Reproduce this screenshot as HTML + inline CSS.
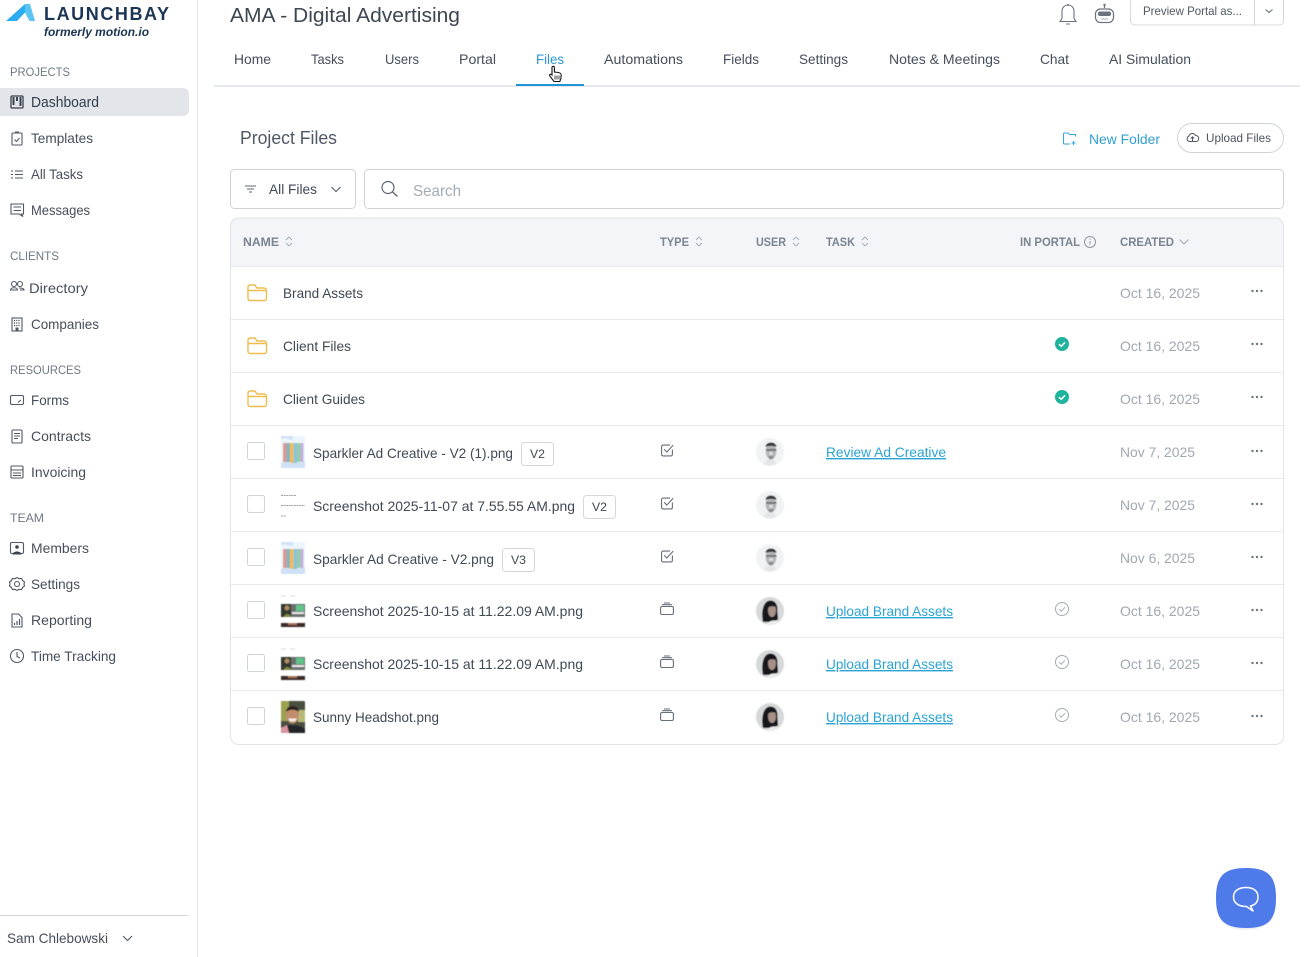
<!DOCTYPE html>
<html lang="en"><head><meta charset="utf-8"><title>AMA - Digital Advertising</title>
<style>
html,body{margin:0;padding:0;background:#fff;width:1304px;height:957px;overflow:hidden}
svg{display:block}
text{font-family:"Liberation Sans",sans-serif;font-size:14px;fill:#444e5c}
.h{font-size:12px;fill:#6f7986}
.n{fill:#3f4957}
.s{font-size:14px;fill:#464f5d}
.th{font-size:12px;font-weight:bold;fill:#7b8490}
.d{fill:#a0a8b4}
.l{fill:#2aa3d4;text-decoration:underline}
.i{fill:none;stroke:#666e79;stroke-width:1.1}
.ic{fill:none;stroke:#4f5966;stroke-width:1.1}
.sort{fill:none;stroke:#a5acb6;stroke-width:.9}
.f{fill:none;stroke:#efbd4e;stroke-width:1.4}
.b{fill:#fff;stroke:#d4d8de;stroke-width:1}
</style></head><body>
<svg width="1304" height="957" viewBox="0 0 1304 957" xmlns="http://www.w3.org/2000/svg">
<defs>
<filter id="bl" x="-10%" y="-10%" width="120%" height="120%"><feGaussianBlur stdDeviation=".45"/></filter>
<symbol id="folder" overflow="visible"><path class="f" d="M1 5.5V3a2 2 0 0 1 2-2h5l2 3h7a2.500 2.500 0 0 1 2.500 2.500v8A2 2 0 0 1 17.500 16.500H3A2 2 0 0 1 1 14.500zM1 6.500h18.500"/></symbol>
<symbol id="dots" overflow="visible"><circle cx="1.500" cy="1.500" r="1.200" fill="#6d7580"/><circle cx="6" cy="1.500" r="1.200" fill="#6d7580"/><circle cx="10.500" cy="1.500" r="1.200" fill="#6d7580"/></symbol>
<symbol id="sortic" overflow="visible"><path class="sort" d="M0 3 3 0l3 3M0 6l3 3 3-3"/></symbol>
<symbol id="task" overflow="visible"><path class="i" d="M9 1.600H2.100a1.500 1.500 0 0 0-1.500 1.500v7.800a1.500 1.500 0 0 0 1.500 1.500h7.800a1.500 1.500 0 0 0 1.500-1.500V6"/><path class="i" d="M3.200 5.800l2.600 2.800 6.400-7"/></symbol>
<symbol id="stack" overflow="visible"><rect x=".6" y="4" width="12.800" height="8" rx="1.500" class="i"/><path class="i" d="M2 2.200h10M4 .5h6"/></symbol>
<symbol id="teal" overflow="visible"><circle cx="7" cy="7" r="7" fill="#1fb39e"/><path d="M4 7.200l2.200 2.100L10 5.300" fill="none" stroke="#fff" stroke-width="1.500"/></symbol>
<symbol id="gray" overflow="visible"><circle cx="7" cy="7" r="6.500" fill="none" stroke="#a5abb3"/><path d="M4.200 7.200l2 2L10 5.300" fill="none" stroke="#a5abb3"/></symbol>
<symbol id="man" overflow="visible"><circle cx="14" cy="14" r="14" fill="#f1f2f3"/><path d="M8 26c1-4 4-5 6-5s5 1 6 5a14 14 0 0 1-12 0z" fill="#e4e5e6"/><ellipse cx="15" cy="13.500" rx="5.300" ry="8" fill="#b4b6b8"/><path d="M9.500 9c0-6 11-6 11 0-3-1.500-8-1.500-11 0z" fill="#34383b"/><path d="M10 11h10.500v1.800H10z" fill="#6b6e71"/><path d="M12.500 18h5l-.8 3h-3.400z" fill="#85888b"/><path d="M13.500 14h3v3h-3z" fill="#e0e1e2"/></symbol>
<symbol id="woman" overflow="visible"><circle cx="14" cy="14" r="14" fill="#d6d8d9"/><path d="M7 25C5 15 7 4 14 3.500c5.500 0 7.500 4 7.500 9 0 5 .5 7 .5 10l-5 2.500z" fill="#16191c"/><ellipse cx="16" cy="13.500" rx="4" ry="6.500" fill="#a69088"/><path d="M13 6.500c3-1 6 1 6.500 3-3-.5-5.500-.5-7 1z" fill="#16191c"/><path d="M11 27.500c1-3 6-5 10-3.500l1 .5a14 14 0 0 1-11 3z" fill="#eceded"/></symbol>
<symbol id="spark" overflow="visible"><rect width="24" height="32" fill="#edf5fc"/><path d="M0 27c8-3 16 2 24-2v7H0z" fill="#cfe1f6"/><path d="M0 3c6-2 8 2 12 0v-3H0z" fill="#cfe1f6"/><rect x="2" y="7" width="3.500" height="19" fill="#d99a93"/><rect x="5.500" y="7" width="3.500" height="19" fill="#86b4c2"/><rect x="9" y="7" width="3.500" height="20" fill="#f1bd4d"/><rect x="12.500" y="7" width="3.500" height="20" fill="#8ac2de"/><rect x="16" y="7" width="3.500" height="19" fill="#95cea6"/><rect x="19.500" y="7" width="3" height="19" fill="#c6afe1"/></symbol>
<symbol id="shot" overflow="visible"><path d="M0 1h5M9 1h5" stroke="#ddd" stroke-width="1"/><rect x="0" y="9" width="24" height="13" fill="#6a706d"/><rect x="0" y="9" width="10" height="13" fill="#33372f"/><circle cx="6" cy="13" r="2.500" fill="#b08a62"/><path d="M3 22c0-4 6-4 7 0z" fill="#7f8740"/><rect x="15" y="10" width="8" height="6" fill="#5fc58b"/><rect x="11" y="17" width="12" height="2" fill="#e8e8e8"/><rect x="0" y="28" width="24" height="4" fill="#3b2c27"/><rect x="7" y="28" width="9" height="2" fill="#a9785c"/></symbol>
<symbol id="chevdn" overflow="visible"><path d="M0 0l4.500 4.500L9 0" fill="none" stroke="#4f5966" stroke-width="1.100"/></symbol>
</defs>

<!-- sidebar -->
<rect x="197" y="0" width="1" height="957" fill="#e6e8ec"/>
<polygon points="6,21 25,4 27,4 27.500,13 25,12.500 17,21" fill="#2aacf0"/>
<polygon points="25,4 30,4 35,21 29.500,21 25,12.500" fill="#5cc4f2"/>
<text x="44" y="20" textLength="125" lengthAdjust="spacing" style="font-size:18px;font-weight:bold;fill:#1c3554">LAUNCHBAY</text>
<text x="44" y="36" textLength="105" lengthAdjust="spacingAndGlyphs" style="font-size:12px;font-weight:bold;font-style:italic;fill:#1c3554">formerly motion.io</text>

<text class="h" x="10" y="76" textLength="60" lengthAdjust="spacingAndGlyphs">PROJECTS</text>
<rect x="-6" y="88" width="195" height="28" rx="6" fill="#e2e5e9"/>
<rect x="11" y="96" width="12" height="12" rx="1" fill="none" stroke="#39424f" stroke-width="1.300"/><path d="M13.500 97v8M17 97v4M20.500 97v9" stroke="#39424f" stroke-width="2" fill="none"/>
<text x="31" y="107" textLength="68" lengthAdjust="spacingAndGlyphs" style="fill:#333d4b;font-size:14.500px;-webkit-text-stroke:.25px #333d4b">Dashboard</text>

<rect x="12" y="133" width="10" height="12" rx="1" class="ic"/><path class="ic" d="M15 132h4M14.500 139.500l2 2 3-3.500"/>
<text class="s" x="31" y="143" textLength="62" lengthAdjust="spacingAndGlyphs">Templates</text>
<path class="ic" d="M15 171h8M15 174.500h8M15 178h8M11 171h2M11 174.500h2M11 178h2"/>
<text class="s" x="31" y="179" textLength="52" lengthAdjust="spacingAndGlyphs">All Tasks</text>
<path class="ic" d="M11 204h12.500v10h-2l1.500 2.500-4-2.500H11zM13.500 207h7.500M13.500 210.500h7.500"/>
<text class="s" x="31" y="215" textLength="59" lengthAdjust="spacingAndGlyphs">Messages</text>

<text class="h" x="10" y="260" textLength="49" lengthAdjust="spacingAndGlyphs">CLIENTS</text>
<circle cx="14" cy="284" r="2.500" class="ic"/><circle cx="20" cy="284" r="2.500" class="ic"/><path class="ic" d="M10.500 290c0-3 7-3 7 0zM19 288c3 0 5 .5 5 2h-4"/>
<text class="s" x="29" y="293" textLength="59" lengthAdjust="spacingAndGlyphs">Directory</text>
<rect x="12" y="318" width="10" height="13" class="ic"/><path d="M14 320.500h6M14 323h6M14 325.500h6" stroke="#4f5966" stroke-width="1.200" stroke-dasharray="1.200 1" fill="none"/><rect x="15.500" y="327.500" width="3" height="3.500" fill="#4f5966"/>
<text class="s" x="31" y="329" textLength="68" lengthAdjust="spacingAndGlyphs">Companies</text>

<text class="h" x="10" y="374" textLength="71" lengthAdjust="spacingAndGlyphs">RESOURCES</text>
<rect x="10.500" y="395.500" width="13" height="9" rx="1.500" class="ic"/><path class="ic" d="M18 402.500l3-2.500"/>
<text class="s" x="31" y="405" textLength="38" lengthAdjust="spacingAndGlyphs">Forms</text>
<rect x="12" y="430" width="10" height="13" rx="1" class="ic"/><path class="ic" d="M14 433.500h6M14 436h6M14 438.500h4"/>
<text class="s" x="31" y="441" textLength="60" lengthAdjust="spacingAndGlyphs">Contracts</text>
<rect x="11" y="466" width="12" height="12" rx="1" class="ic"/><path class="ic" d="M11 470h12M13 473h8M13 475.500h8"/>
<text class="s" x="31" y="477" textLength="55" lengthAdjust="spacingAndGlyphs">Invoicing</text>

<text class="h" x="10" y="522" textLength="34" lengthAdjust="spacingAndGlyphs">TEAM</text>
<rect x="10.500" y="542.500" width="13" height="11" rx="1.500" class="ic"/><circle cx="17" cy="547" r="1.800" fill="#39424f"/><path d="M12.500 554.500c.5-4 8.500-4 9 0z" fill="#39424f"/>
<text class="s" x="31" y="553" textLength="58" lengthAdjust="spacingAndGlyphs">Members</text>
<path class="ic" d="M17 577.500l2 1.200 2.500-.2 1.200 2.200 1.800 1.300-.5 2 .5 2-1.800 1.300-1.200 2.200-2.500-.2-2 1.200-2-1.200-2.500.2-1.200-2.200-1.800-1.300.5-2-.5-2 1.800-1.300 1.200-2.200 2.500.2z"/><circle cx="17" cy="584" r="2.500" class="ic"/>
<text class="s" x="31" y="589" textLength="49" lengthAdjust="spacingAndGlyphs">Settings</text>
<path class="ic" d="M12 614h6.500l3.500 3.500V627H12z"/><path d="M14.500 625v-2M17 625v-4M19.500 625v-6" stroke="#4f5966" stroke-width="1.200"/>
<text class="s" x="31" y="625" textLength="61" lengthAdjust="spacingAndGlyphs">Reporting</text>
<circle cx="17" cy="656" r="6.500" class="ic"/><path class="ic" d="M17 652v4.500l3 1.500"/>
<text class="s" x="31" y="661" textLength="85" lengthAdjust="spacingAndGlyphs">Time Tracking</text>

<rect x="0" y="915" width="188" height="1" fill="#d5d8dd"/>
<text class="s" x="7" y="943" textLength="101" lengthAdjust="spacingAndGlyphs">Sam Chlebowski</text>
<use href="#chevdn" x="123" y="936"/>

<!-- header -->
<text x="230" y="22" textLength="230" lengthAdjust="spacingAndGlyphs" style="font-size:20px;fill:#3d4653;-webkit-text-stroke:.35px #3d4653">AMA - Digital Advertising</text>
<path class="i" d="M1060 21.500h16l-2-3V11a6 6 0 0 0-12 0v7.500zM1066 24h4" style="stroke:#6b7380"/><circle cx="1068" cy="5" r="1" fill="#6b7380"/>
<rect x="1095.500" y="9" width="18" height="13.500" rx="5" fill="none" stroke="#6b7380" stroke-width="1.200"/><rect x="1098" y="11.500" width="13" height="4.500" rx="2" fill="#6b7380"/><path d="M1104.500 5v3" stroke="#6b7380" stroke-width="1.200"/><circle cx="1104.500" cy="5" r="1.200" fill="#6b7380"/><path d="M1101 19h7" stroke="#aeb3ba"/>
<rect x="1130.500" y="-3" width="153" height="28" rx="4" class="b"/><rect x="1254" y="0" width="1" height="25" fill="#d4d8de"/>
<text x="1143" y="15" textLength="99" lengthAdjust="spacingAndGlyphs" style="font-size:12px;fill:#4f5966">Preview Portal as...</text>
<path d="M1265.500 9.500l3.500 3 3.500-3" fill="none" stroke="#5c6470"/>

<text x="234" y="64" textLength="37" lengthAdjust="spacingAndGlyphs">Home</text>
<text x="311" y="64" textLength="33" lengthAdjust="spacingAndGlyphs">Tasks</text>
<text x="385" y="64" textLength="34" lengthAdjust="spacingAndGlyphs">Users</text>
<text x="459" y="64" textLength="37" lengthAdjust="spacingAndGlyphs">Portal</text>
<text x="536" y="64" textLength="28" lengthAdjust="spacingAndGlyphs" style="fill:#2b97d1">Files</text>
<text x="604" y="64" textLength="79" lengthAdjust="spacingAndGlyphs">Automations</text>
<text x="723" y="64" textLength="36" lengthAdjust="spacingAndGlyphs">Fields</text>
<text x="799" y="64" textLength="49" lengthAdjust="spacingAndGlyphs">Settings</text>
<text x="889" y="64" textLength="111" lengthAdjust="spacingAndGlyphs">Notes &amp; Meetings</text>
<text x="1040" y="64" textLength="29" lengthAdjust="spacingAndGlyphs">Chat</text>
<text x="1109" y="64" textLength="82" lengthAdjust="spacingAndGlyphs">AI Simulation</text>
<rect x="214" y="85" width="1086" height="2" fill="#e5e8ec"/>
<rect x="516" y="84" width="68" height="2" fill="#1f94d8"/>
<path d="M552 75v-7.500a1.200 1.200 0 0 1 2.400 0V72l4 .5c2 .4 2.800 1 2.800 3l-.4 3.500-1 2.500H554l-4.200-5.500c-.8-1.500.8-2.500 2.200-1z" fill="#fff" stroke="#111" stroke-width="1.100"/><path d="M555 75.500v4M557 75.500v4M559 75.500v4" stroke="#111" stroke-width=".8"/>

<!-- toolbar -->
<text x="240" y="144" textLength="97" lengthAdjust="spacingAndGlyphs" style="font-size:18px;fill:#4f5966">Project Files</text>
<path d="M1070 144h-5.500a1 1 0 0 1-1-1v-9a1 1 0 0 1 1-1h3.500l1.500 1.500h6v2M1073.500 141v4M1071.500 143h4" fill="none" stroke="#3aa5d8" stroke-width="1.100"/>
<text x="1089" y="144" textLength="71" lengthAdjust="spacingAndGlyphs" style="fill:#2f9fd6">New Folder</text>
<rect x="1177.500" y="123.500" width="106" height="29" rx="14.500" class="b" style="stroke:#cfd3d9"/>
<path d="M1189 141.500a3 3 0 0 1 0-5.500 3.500 3.500 0 0 1 6.500-.5 3 3 0 0 1 .5 6zM1192.500 141v-4M1190.800 138.500l1.700-1.700 1.700 1.700" fill="none" stroke="#4f5966" stroke-width="1"/>
<text x="1206" y="142" textLength="65" lengthAdjust="spacingAndGlyphs" style="font-size:12px;fill:#4a5462">Upload Files</text>

<rect x="230.500" y="169.500" width="125" height="39" rx="4" class="b" style="stroke:#cfd3d9"/>
<path d="M245 186h11M247 189h7M249 192h3" stroke="#5c6470" fill="none"/>
<text x="269" y="194" textLength="48" lengthAdjust="spacingAndGlyphs" class="n">All Files</text>
<use href="#chevdn" x="331.500" y="187"/>
<rect x="364.500" y="169.500" width="919" height="39" rx="4" class="b" style="stroke:#cfd3d9"/>
<circle cx="388" cy="187.500" r="6" fill="none" stroke="#5c6470" stroke-width="1.200"/><path d="M392.500 192l5 4.500" stroke="#5c6470" stroke-width="1.300"/>
<text x="413" y="196" textLength="48" lengthAdjust="spacingAndGlyphs" style="font-size:16px;fill:#a3abb6">Search</text>

<!-- table -->
<path d="M230.500 266.500V226a8 8 0 0 1 8-8h1037a8 8 0 0 1 8 8v40.500z" fill="#f3f5f9"/>
<rect x="230.500" y="218" width="1053" height="526.500" rx="8" fill="none" stroke="#e0e3e7"/>
<path d="M231 266.500h1052" stroke="#e8eaee"/>
<path d="M231 319.500h1052M231 372.500h1052M231 425.500h1052M231 478.500h1052M231 531.500h1052M231 584.500h1052M231 637.500h1052M231 690.500h1052" stroke="#e9ebee"/>

<text class="th" x="243" y="246" textLength="36" lengthAdjust="spacingAndGlyphs">NAME</text><use href="#sortic" x="286" y="237"/>
<text class="th" x="660" y="246" textLength="29" lengthAdjust="spacingAndGlyphs">TYPE</text><use href="#sortic" x="696" y="237"/>
<text class="th" x="756" y="246" textLength="30" lengthAdjust="spacingAndGlyphs">USER</text><use href="#sortic" x="793" y="237"/>
<text class="th" x="826" y="246" textLength="29" lengthAdjust="spacingAndGlyphs">TASK</text><use href="#sortic" x="862" y="237"/>
<text class="th" x="1020" y="246" textLength="60" lengthAdjust="spacingAndGlyphs">IN PORTAL</text>
<circle cx="1090" cy="242" r="5.500" fill="none" stroke="#8f97a2"/><path d="M1090 241v3.500M1090 238.800v1" stroke="#8f97a2"/>
<text class="th" x="1120" y="246" textLength="54" lengthAdjust="spacingAndGlyphs">CREATED</text>
<path d="M1179.500 239.500l4.500 4.500 4.500-4.500" fill="none" stroke="#a0a8b2"/>

<!-- folders -->
<use href="#folder" x="247" y="284"/><text class="n" x="283" y="298" textLength="80" lengthAdjust="spacingAndGlyphs">Brand Assets</text>
<use href="#folder" x="247" y="337"/><text class="n" x="283" y="351" textLength="68" lengthAdjust="spacingAndGlyphs">Client Files</text>
<use href="#folder" x="247" y="390"/><text class="n" x="283" y="404" textLength="82" lengthAdjust="spacingAndGlyphs">Client Guides</text>
<use href="#teal" x="1055" y="337"/><use href="#teal" x="1055" y="390"/>

<!-- checkboxes -->
<rect x="247.500" y="442.500" width="17" height="17" rx="2" class="b" style="stroke:#cfd4da"/>
<rect x="247.500" y="495.500" width="17" height="17" rx="2" class="b" style="stroke:#cfd4da"/>
<rect x="247.500" y="548.500" width="17" height="17" rx="2" class="b" style="stroke:#cfd4da"/>
<rect x="247.500" y="601.500" width="17" height="17" rx="2" class="b" style="stroke:#cfd4da"/>
<rect x="247.500" y="654.500" width="17" height="17" rx="2" class="b" style="stroke:#cfd4da"/>
<rect x="247.500" y="707.500" width="17" height="17" rx="2" class="b" style="stroke:#cfd4da"/>

<!-- thumbs -->
<use href="#spark" x="281" y="436" filter="url(#bl)"/>
<path d="M281 495.500h15M281 505.500h24M281 516h5" stroke="#a0a4a9" stroke-width="1" stroke-dasharray="2 .6"/>
<use href="#spark" x="281" y="542" filter="url(#bl)"/>
<use href="#shot" x="281" y="595" filter="url(#bl)"/>
<use href="#shot" x="281" y="648" filter="url(#bl)"/>
<g filter="url(#bl)"><rect x="281" y="701" width="24" height="32" rx="1" fill="#4b4f42"/><rect x="281" y="701" width="8" height="20" fill="#9aa24f"/><rect x="298" y="710" width="7" height="12" fill="#b7bb78"/><ellipse cx="292.500" cy="715" rx="6.500" ry="8.500" fill="#c08c6c"/><path d="M286 712c0-8 13-8 13 0-3-3-10-3-13 0z" fill="#2a211d"/><path d="M288 718.500h9l-2 3h-5z" fill="#f1ece6"/><path d="M281 733v-4c3-4 7-4 11-4s9 1 13 4v4z" fill="#24282a"/><path d="M281 733v-5l6-3 2 8z" fill="#d9949e"/></g>

<!-- names -->
<text class="n" x="313" y="458" textLength="200" lengthAdjust="spacingAndGlyphs">Sparkler Ad Creative - V2 (1).png</text>
<rect x="521.500" y="442.500" width="32" height="23" rx="3" fill="#fff" stroke="#d4d8de"/><text x="530" y="458" textLength="15" lengthAdjust="spacingAndGlyphs" style="font-size:12px" class="n">V2</text>
<text class="n" x="313" y="511" textLength="262" lengthAdjust="spacingAndGlyphs">Screenshot 2025-11-07 at 7.55.55 AM.png</text>
<rect x="583.500" y="495.500" width="32" height="23" rx="3" fill="#fff" stroke="#d4d8de"/><text x="592" y="511" textLength="15" lengthAdjust="spacingAndGlyphs" style="font-size:12px" class="n">V2</text>
<text class="n" x="313" y="564" textLength="181" lengthAdjust="spacingAndGlyphs">Sparkler Ad Creative - V2.png</text>
<rect x="502.500" y="548.500" width="32" height="23" rx="3" fill="#fff" stroke="#d4d8de"/><text x="511" y="564" textLength="15" lengthAdjust="spacingAndGlyphs" style="font-size:12px" class="n">V3</text>
<text class="n" x="313" y="616" textLength="270" lengthAdjust="spacingAndGlyphs">Screenshot 2025-10-15 at 11.22.09 AM.png</text>
<text class="n" x="313" y="669" textLength="270" lengthAdjust="spacingAndGlyphs">Screenshot 2025-10-15 at 11.22.09 AM.png</text>
<text class="n" x="313" y="722" textLength="126" lengthAdjust="spacingAndGlyphs">Sunny Headshot.png</text>

<!-- type -->
<use href="#task" x="661" y="443.500"/><use href="#task" x="661" y="496.500"/><use href="#task" x="661" y="549.500"/>
<use href="#stack" x="660" y="602.500"/><use href="#stack" x="660" y="655.500"/><use href="#stack" x="660" y="708.500"/>

<!-- avatars -->
<use href="#man" x="756" y="438" filter="url(#bl)"/><use href="#man" x="756" y="491" filter="url(#bl)"/><use href="#man" x="756" y="544" filter="url(#bl)"/>
<use href="#woman" x="756" y="597" filter="url(#bl)"/><use href="#woman" x="756" y="650" filter="url(#bl)"/><use href="#woman" x="756" y="703" filter="url(#bl)"/>

<!-- tasks -->
<text class="l" x="826" y="457" textLength="120" lengthAdjust="spacingAndGlyphs">Review Ad Creative</text>
<text class="l" x="826" y="616" textLength="127" lengthAdjust="spacingAndGlyphs">Upload Brand Assets</text>
<text class="l" x="826" y="669" textLength="127" lengthAdjust="spacingAndGlyphs">Upload Brand Assets</text>
<text class="l" x="826" y="722" textLength="127" lengthAdjust="spacingAndGlyphs">Upload Brand Assets</text>

<use href="#gray" x="1055" y="602"/><use href="#gray" x="1055" y="655"/><use href="#gray" x="1055" y="708"/>

<!-- dates -->
<text class="d" x="1120" y="298" textLength="80" lengthAdjust="spacingAndGlyphs">Oct 16, 2025</text>
<text class="d" x="1120" y="351" textLength="80" lengthAdjust="spacingAndGlyphs">Oct 16, 2025</text>
<text class="d" x="1120" y="404" textLength="80" lengthAdjust="spacingAndGlyphs">Oct 16, 2025</text>
<text class="d" x="1120" y="457" textLength="75" lengthAdjust="spacingAndGlyphs">Nov 7, 2025</text>
<text class="d" x="1120" y="510" textLength="75" lengthAdjust="spacingAndGlyphs">Nov 7, 2025</text>
<text class="d" x="1120" y="563" textLength="75" lengthAdjust="spacingAndGlyphs">Nov 6, 2025</text>
<text class="d" x="1120" y="616" textLength="80" lengthAdjust="spacingAndGlyphs">Oct 16, 2025</text>
<text class="d" x="1120" y="669" textLength="80" lengthAdjust="spacingAndGlyphs">Oct 16, 2025</text>
<text class="d" x="1120" y="722" textLength="80" lengthAdjust="spacingAndGlyphs">Oct 16, 2025</text>

<use href="#dots" x="1251" y="289.500"/><use href="#dots" x="1251" y="342.500"/><use href="#dots" x="1251" y="395.500"/><use href="#dots" x="1251" y="449.500"/><use href="#dots" x="1251" y="502.500"/><use href="#dots" x="1251" y="555.500"/><use href="#dots" x="1251" y="608.500"/><use href="#dots" x="1251" y="661.500"/><use href="#dots" x="1251" y="714.500"/>

<!-- chat -->
<path d="M1246 871c21 0 30 8 30 28s-9 29-30 29-30-9-30-29 9-28 30-28z" fill="#eef0f2" transform="translate(0 2)"/>
<path d="M1246 868c22 0 30 8 30 30s-8 30-30 30-30-8-30-30 8-30 30-30z" fill="#4f7bea"/>
<path d="M1246 887.500c7.500 0 12 3.500 12 9.500 0 5-3 8-7.500 9l2.500 5-6.500-4.500c-8 0-13-3.500-13-9.500s5-9.500 12.500-9.500z" fill="none" stroke="#fff" stroke-width="1.500" stroke-linejoin="round"/>
</svg>
</body></html>
